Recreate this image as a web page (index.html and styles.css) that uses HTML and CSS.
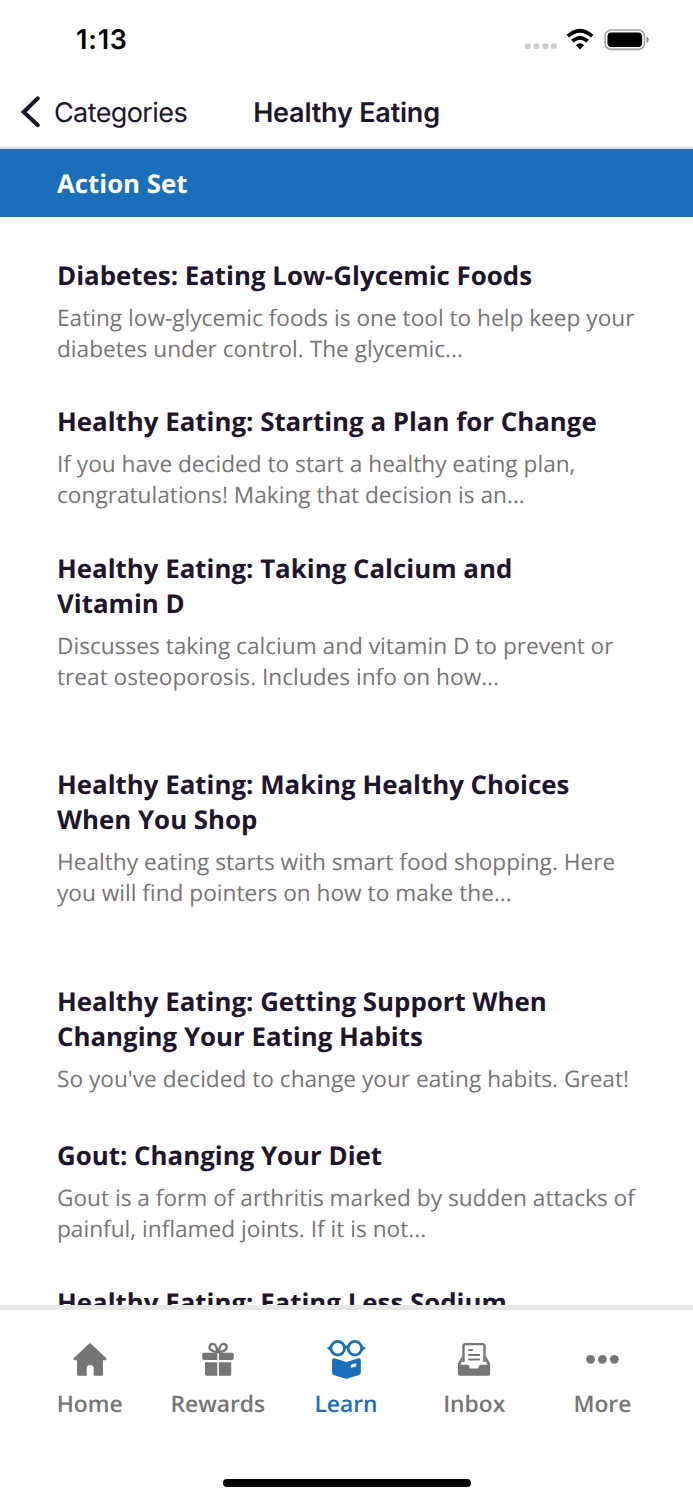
FILE: index.html
```html
<!DOCTYPE html>
<html lang="en">
<head>
    <meta charset="UTF-8">
    <meta name="viewport" content="width=device-width, initial-scale=1.0">
    <title>Healthy Eating</title>
    <link rel="stylesheet" href="styles.css">
</head>
<body>
    <div class="screen">
        <div class="status-bar">
            <div class="time">1:13</div>
            <div class="status-icons">
                <svg class="signal" width="32" height="7" viewBox="0 0 32 7" fill="#cbcbcb">
                    <rect x="0" y="0.5" width="5.6" height="5.6" rx="1.6"/>
                    <rect x="8.7" y="0.5" width="5.6" height="5.6" rx="1.6"/>
                    <rect x="17.4" y="0.5" width="5.6" height="5.6" rx="1.6"/>
                    <rect x="26.1" y="0.5" width="5.6" height="5.6" rx="1.6"/>
                </svg>
                <svg class="wifi" width="28" height="22" viewBox="0 0 28 22">
                    <path d="M1.8 8.2Q14-2.8 26.2 8.2" fill="none" stroke="#000" stroke-width="3.8"/>
                    <path d="M6.4 13.2Q14 6.6 21.6 13.2" fill="none" stroke="#000" stroke-width="3.7"/>
                    <path d="M9.8 17.2Q14 13.4 18.2 17.2L14 21.4Z" fill="#000"/>
                </svg>
                <svg class="battery" width="46" height="22" viewBox="0 0 46 22">
                    <rect x="1.1" y="1" width="39.3" height="19.4" rx="6" fill="none" stroke="#a0a0a0" stroke-width="1.6"/>
                    <rect x="3.5" y="3.4" width="34.6" height="14.7" rx="3.8" fill="#000"/>
                    <path d="M42.4 7.4Q44.8 8.2 44.8 10.7Q44.8 13.2 42.4 14Z" fill="#909090"/>
                </svg>
            </div>
        </div>

        <div class="nav-bar">
            <div class="back">
                <svg width="20" height="32" viewBox="0 0 20 32">
                    <path d="M17.8 2.3L3.7 16L17.8 29.2" fill="none" stroke="#1e152d" stroke-width="4" stroke-linecap="round" stroke-linejoin="miter"/>
                </svg>
                <span>Categories</span>
            </div>
            <h1>Healthy Eating</h1>
        </div>

        <div class="section-header">Action Set</div>

        <div class="list">
            <div class="item">
                <h2>Diabetes: Eating Low-Glycemic Foods</h2>
                <p>Eating low-glycemic foods is one tool to help keep your<br>diabetes under control. The glycemic...</p>
            </div>
            <div class="item">
                <h2>Healthy Eating: Starting a Plan for Change</h2>
                <p>If you have decided to start a healthy eating plan,<br>congratulations! Making that decision is an...</p>
            </div>
            <div class="item tall">
                <h2>Healthy Eating: Taking Calcium and<br>Vitamin D</h2>
                <p>Discusses taking calcium and vitamin D to prevent or<br>treat osteoporosis. Includes info on how...</p>
            </div>
            <div class="item tall">
                <h2>Healthy Eating: Making Healthy Choices<br>When You Shop</h2>
                <p>Healthy eating starts with smart food shopping. Here<br>you will find pointers on how to make the...</p>
            </div>
            <div class="item short">
                <h2>Healthy Eating: Getting Support When<br>Changing Your Eating Habits</h2>
                <p>So you've decided to change your eating habits. Great!</p>
            </div>
            <div class="item">
                <h2>Gout: Changing Your Diet</h2>
                <p>Gout is a form of arthritis marked by sudden attacks of<br>painful, inflamed joints. If it is not...</p>
            </div>
            <div class="item">
                <h2>Healthy Eating: Eating Less Sodium</h2>
            </div>
        </div>

        <div class="tab-bar">
            <div class="tab">
                <svg width="40" height="40" viewBox="0 0 40 40" fill="currentColor">
                    <path d="M19 3.7Q20 2.7 21 3.7L36.1 18Q37 20 35 20.2H33V34.2Q33 35.8 31.4 35.8H23.7V28.5Q23.7 25 20.2 25Q16.7 25 16.7 28.5V35.8H8.6Q7 35.8 7 34.2V20.2H5Q3 20 3.9 18Z"/>
                </svg>
                <span>Home</span>
            </div>
            <div class="tab">
                <svg width="40" height="40" viewBox="0 0 40 40" fill="currentColor">
                    <path d="M19.2 12.2C19 6 16.8 3.7 14.2 4C11.3 4.3 10.5 8 13 10C14.3 11 16.5 11.8 19.2 12.2ZM21 12.2C21.2 6 23.4 3.7 26 4C28.9 4.3 29.7 8 27.2 10C25.9 11 23.7 11.8 21 12.2Z" fill="none" stroke="currentColor" stroke-width="2.3"/>
                    <path d="M6 12.7H19.3V19.9H6Q4.2 19.9 4.2 18.1V14.5Q4.2 12.7 6 12.7ZM20.9 12.7H34Q35.8 12.7 35.8 14.5V18.1Q35.8 19.9 34 19.9H20.9Z"/>
                    <path d="M7 22.2H19.3V35.7H9Q7 35.7 7 33.7ZM20.9 22.2H33.2V33.7Q33.2 35.7 31.2 35.7H20.9Z"/>
                </svg>
                <span>Rewards</span>
            </div>
            <div class="tab active">
                <svg width="40" height="40" viewBox="0 0 40 40">
                    <g fill="none" stroke="currentColor" stroke-width="2.8">
                        <circle cx="11.7" cy="8.2" r="6.8"/>
                        <circle cx="28.9" cy="8.2" r="6.8"/>
                        <path d="M18 7.5Q20.3 6.5 22.6 7.5"/>
                    </g>
                    <path d="M5 5.2L0.8 8.2L5 11.3ZM35.6 5.2L39.8 8.2L35.6 11.3Z" fill="currentColor"/>
                    <path d="M8.6 18.3L20.3 22L32.3 18.3Q34.8 17.8 34.8 20.3V32.5Q34.8 34.3 33.1 34.9L21.6 38.5Q20.3 39 19 38.5L7.7 34.9Q6 34.3 6 32.5V20.3Q6 17.8 8.6 18.3Z" fill="currentColor"/>
                    <path d="M25.4 25L29.8 23.7V26L25.4 27.3Z" fill="#fff" stroke="#fff" stroke-width="1"/>
                </svg>
                <span>Learn</span>
            </div>
            <div class="tab">
                <svg width="40" height="40" viewBox="0 0 40 40">
                    <path d="M9.5 22V6.3Q9.5 4.1 11.7 4.1H28.3Q30.5 4.1 30.5 6.3V22" fill="none" stroke="currentColor" stroke-width="2.4"/>
                    <path d="M8.4 15.5L4.5 22.4Q3.9 23.4 3.9 24.6V33.7Q3.9 35.8 6 35.8H34Q36.1 35.8 36.1 33.7V24.6Q36.1 23.4 35.5 22.4L31.6 15.5V20.8L33.6 24.8H26.5Q25.3 24.8 24.9 26L24.1 28.5H15.9L15.1 26Q14.7 24.8 13.5 24.8H6.4L8.4 20.8Z" fill="currentColor"/>
                    <path d="M15 10H18M15 15H25.2M15 19.6H25.2" fill="none" stroke="currentColor" stroke-width="2" stroke-linecap="round"/>
                </svg>
                <span>Inbox</span>
            </div>
            <div class="tab">
                <svg width="40" height="40" viewBox="0 0 40 40" fill="currentColor">
                    <circle cx="8.5" cy="19.3" r="4.4"/>
                    <circle cx="20.4" cy="19.3" r="4.4"/>
                    <circle cx="32.3" cy="19.3" r="4.4"/>
                </svg>
                <span>More</span>
            </div>
        </div>

        <div class="home-area">
            <div class="home-indicator"></div>
        </div>
    </div>
</body>
</html>
```

FILE: styles.css
```css
* {
    box-sizing: border-box;
}
body {
    margin: 0;
    background: #fff;
    font-family: "Open Sans", "Noto Sans", sans-serif;
    color: #1e152d;
    text-rendering: geometricPrecision;
}
h1, h2, p {
    margin: 0;
}
svg {
    display: block;
}
.screen {
    width: 693px;
    height: 1500px;
    display: flex;
    flex-direction: column;
    overflow: hidden;
}
.status-bar {
    height: 77px;
    flex: none;
    display: flex;
    justify-content: space-between;
    padding: 22px 43.5px 0 76px;
}
.time {
    font-family: Inter, sans-serif;
    font-size: 27px;
    font-weight: 600;
    line-height: 36px;
    letter-spacing: 0.8px;
    color: #000;
}
.status-icons {
    display: flex;
    align-items: flex-start;
}
.signal {
    margin-top: 21px;
    margin-right: 9px;
}
.wifi {
    margin-top: 6px;
    margin-right: 10px;
}
.battery {
    margin-top: 6.5px;
}
.nav-bar {
    height: 72px;
    flex: none;
    display: grid;
    grid-template-columns: 1fr auto 1fr;
    align-items: center;
    padding: 0 20px;
    border-bottom: 2px solid #dcdcdc;
    font-family: Inter, sans-serif;
}
.back {
    display: flex;
    align-items: center;
    font-size: 27px;
    letter-spacing: -0.6px;
    gap: 14px;
}
.nav-bar h1 {
    font-size: 27px;
    font-weight: 600;
    letter-spacing: -0.2px;
}
.section-header {
    height: 68px;
    flex: none;
    padding-left: 57px;
    background: #1a6fb8;
    color: #fff;
    font-size: 25.8px;
    font-weight: 700;
    line-height: 69px;
}
.list {
    flex: 1;
    min-height: 0;
    overflow: hidden;
    padding: 41px 40px 0 57px;
}
.item {
    height: 146.4px;
    white-space: nowrap;
}
.item.tall {
    height: 216.4px;
}
.item.short {
    height: 154.6px;
}
.item h2 {
    margin-bottom: 9px;
    font-size: 25.87px;
    font-weight: 700;
    line-height: 35px;
}
.item p {
    color: #757575;
    font-size: 22.67px;
    line-height: 31px;
}
.tab-bar {
    height: 125px;
    flex: none;
    display: flex;
    padding: 30px 26.5px 0 25.5px;
    border-top: 5px solid #e6e6e6;
}
.tab {
    flex: 1;
    display: flex;
    flex-direction: column;
    align-items: center;
    color: #757575;
    font-size: 22.8px;
    font-weight: 600;
    line-height: 30px;
}
.tab span {
    margin-top: 9px;
}
.tab.active {
    color: #1a6fb8;
}
.home-area {
    height: 70px;
    flex: none;
    display: flex;
    justify-content: center;
    align-items: flex-end;
    padding-bottom: 13px;
}
.home-indicator {
    width: 248px;
    height: 8px;
    border-radius: 4px;
    background: #000;
}
```
